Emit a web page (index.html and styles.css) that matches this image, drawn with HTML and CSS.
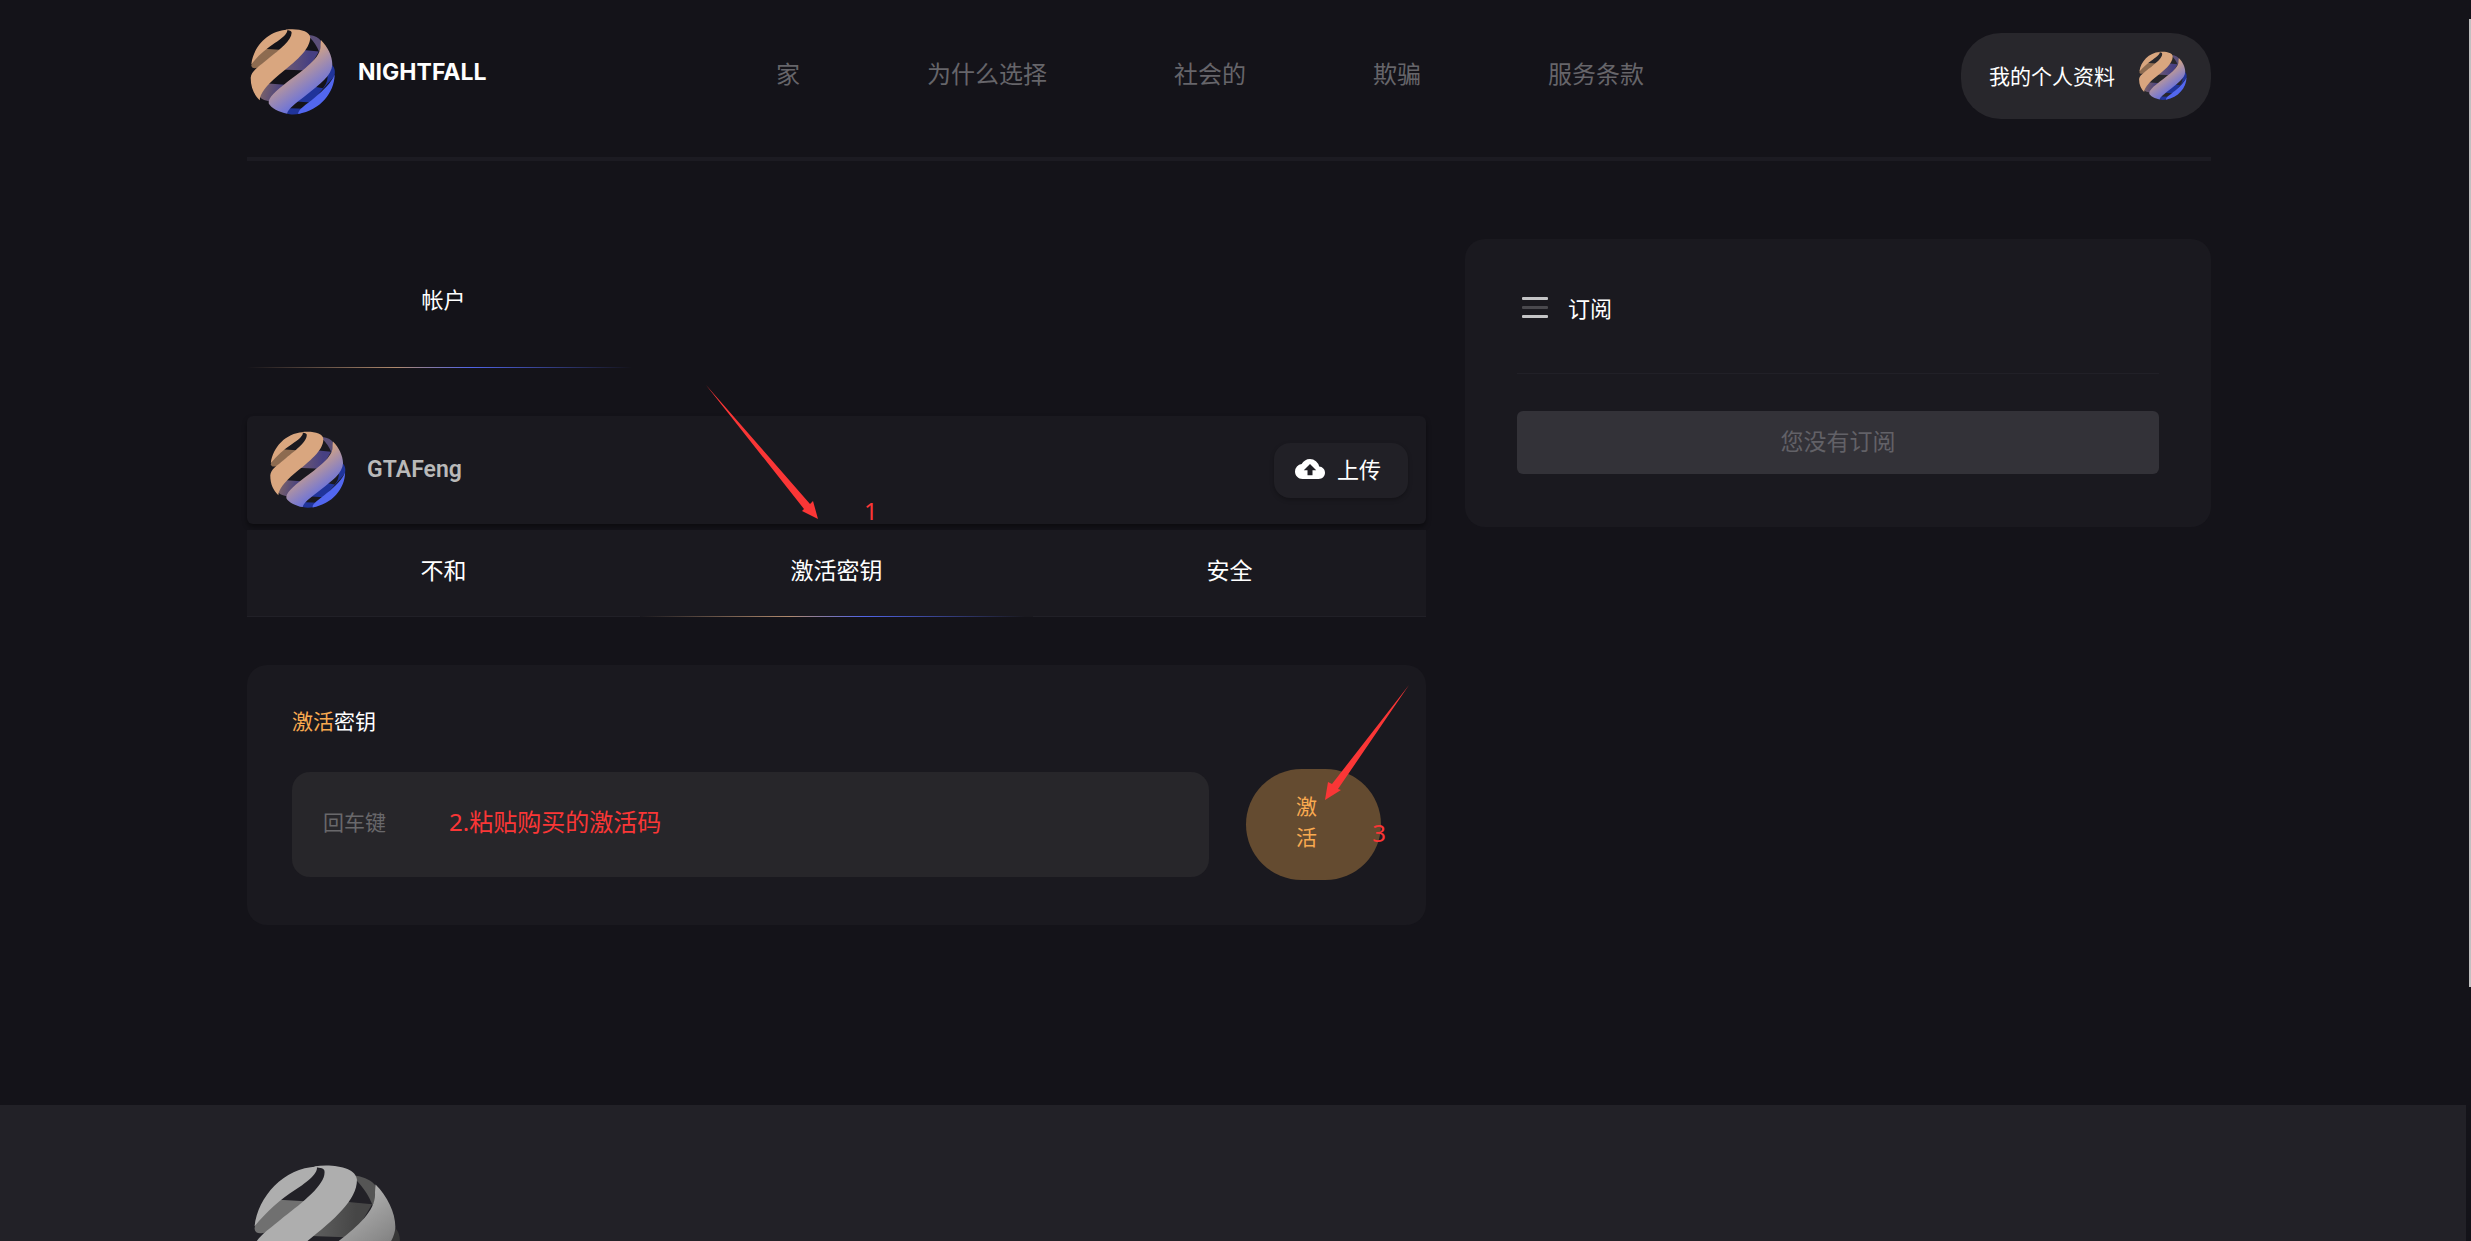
FILE: index.html
```html
<!DOCTYPE html>
<html lang="zh-CN">
<head>
    <meta charset="UTF-8">
    <meta name="viewport" content="width=device-width, initial-scale=1.0">
    <title>NIGHTFALL</title>
    <link rel="stylesheet" href="styles.css">
</head>
<body>
    <!-- 公用图标 -->
    <svg class="sprite" aria-hidden="true">
        <defs>
            <linearGradient id="purple" gradientUnits="userSpaceOnUse" x1="125" y1="115" x2="205" y2="225">
                <stop offset="0" stop-color="#d9a67f"/>
                <stop offset="1" stop-color="#5468ee"/>
            </linearGradient>
            <linearGradient id="backTop" gradientUnits="userSpaceOnUse" x1="110" y1="110" x2="185" y2="115">
                <stop offset="0" stop-color="#6e5a72"/>
                <stop offset="1" stop-color="#474082"/>
            </linearGradient>
            <linearGradient id="backLow" gradientUnits="userSpaceOnUse" x1="38" y1="190" x2="95" y2="205">
                <stop offset="0" stop-color="#7e6467"/>
                <stop offset="1" stop-color="#4b437f"/>
            </linearGradient>
        </defs>
        <symbol id="globe" viewBox="0 0 273 275">
            <path fill="#8d6b50" d="M12 118C14 98 28 80 48 68L98 71L32 124C20 128 13 126 12 118Z"/>
            <path fill="url(#backTop)" d="M128 68L214 76L180 133L98 130Z"/>
            <path fill="#5b4f78" d="M186 27C202 29 214 36 220 44C224 55 221 68 215 78C208 60 197 45 186 34Z"/>
            <path fill="url(#backLow)" d="M54 171L122 176L68 225C50 224 38 217 35 208Z"/>
            <path fill="#20349b" d="M252 115C263 124 263 140 260 150L190 229L145 226L180 178L226 186C237 174 241 160 240 140Z"/>
            <path fill="#20349b" d="M119 262C118 254 122 249 128 246L172 247L158 262C143 265 128 265 119 262Z"/>
            <path fill="#d9a67f" d="M12 114C18 62 62 14 119 11C122 22 104 37 82 51C56 68 32 89 12 114Z"/>
            <path fill="#d9a67f" d="M114 11C150 6 187 14 188 34C188 72 142 108 92 148C56 178 38 203 37 222C20 205 10 185 10 155C12 135 30 125 62 98C98 70 136 40 132 18C130 12 122 14 114 11Z"/>
            <path fill="url(#purple)" d="M220 42C240 62 254 90 254 115C252 150 215 175 180 203C140 235 122 246 119 262C95 258 70 245 64 232C61 215 85 195 120 167C168 130 222 95 219 56Z"/>
            <path fill="#5267ef" d="M261 146C260 200 218 252 152 263C150 250 176 235 200 215C230 191 250 170 261 146Z"/>
        </symbol>
    </svg>

    <header class="header">
        <div class="brand">
            <svg class="brand-logo"><use href="#globe"/></svg>
            <span>NIGHTFALL</span>
        </div>
        <nav class="nav">
            <a href="#">家</a>
            <a href="#">为什么选择</a>
            <a href="#">社会的</a>
            <a href="#">欺骗</a>
            <a href="#">服务条款</a>
        </nav>
        <a class="profile" href="#">
            我的个人资料
            <svg class="profile-logo"><use href="#globe"/></svg>
        </a>
    </header>

    <main class="main">
        <div class="content">
            <div class="tabs">
                <button class="tab tab-account active">帐户</button>
            </div>

            <section class="user">
                <svg class="avatar"><use href="#globe"/></svg>
                <span class="user-name">GTAFeng</span>
                <button class="upload">
                    <svg class="cloud" viewBox="0 4 24 16"><path fill="#fff" d="M19.35 10.04A7.49 7.49 0 0 0 12 4C9.11 4 6.6 5.64 5.35 8.04A5.994 5.994 0 0 0 0 14c0 3.31 2.69 6 6 6h13c2.76 0 5-2.24 5-5 0-2.64-2.05-4.78-4.65-4.96zM14 13v4h-4v-4H7l5-5 5 5h-3z"/></svg>
                    上传
                </button>
            </section>

            <div class="tabs tabs-panel">
                <button class="tab">不和</button>
                <button class="tab active">激活密钥</button>
                <button class="tab">安全</button>
                <!-- 步骤 1 -->
                <svg class="arrow arrow-one" viewBox="0 0 112 134"><path fill="#fa3636" d="M0 0L104 119L107 116L112 134L96 126L98 124Z"/></svg>
                <span class="note note-one">1</span>
            </div>

            <section class="card activate">
                <h2><span class="accent">激活</span>密钥</h2>
                <form class="key-form">
                    <div class="field">
                        <input type="text" class="key-input" placeholder="回车键" aria-label="激活密钥">
                        <span class="note note-two">2.粘贴购买的激活码</span>
                    </div>
                    <div class="submit">
                        <button type="button" class="activate-btn">激<br>活</button>
                        <!-- 步骤 3 -->
                        <svg class="arrow arrow-three" viewBox="0 0 84 115"><path fill="#fa3636" d="M84 0L13 104L16 105L0 115L3 97L7 99Z"/></svg>
                        <span class="note note-three">3</span>
                    </div>
                </form>
            </section>
        </div>

        <aside class="card sidebar">
            <h2 class="sidebar-title">
                <svg class="bars" viewBox="0 0 26 22">
                    <rect width="26" height="3" rx="1" fill="#c4c4c6"/>
                    <rect y="9" width="26" height="3" rx="1" fill="#4a494e"/>
                    <rect y="18" width="26" height="3" rx="1" fill="#c4c4c6"/>
                </svg>
                订阅
            </h2>
            <button class="empty" disabled>您没有订阅</button>
        </aside>
    </main>

    <footer class="footer">
        <svg class="footer-logo"><use href="#globe"/></svg>
    </footer>
    <div class="scroll"></div>
</body>
</html>
```

FILE: styles.css
```css
* {
    box-sizing: border-box;
}
body {
    margin: 0;
    height: 100vh;
    overflow: hidden;
    display: flex;
    flex-direction: column;
    background: #141319;
    color: #fff;
    font-family: "Noto Sans", "Noto Sans CJK SC", sans-serif;
    font-size: 22px;
    line-height: 32px;
}
button, input {
    border: none;
    font: inherit;
    color: inherit;
}
button {
    cursor: pointer;
}
a {
    color: inherit;
    text-decoration: none;
}
h2 {
    margin: 0;
    font-size: 22px;
    font-weight: 400;
}
svg {
    display: block;
    flex-shrink: 0;
}
.sprite {
    position: absolute;
    width: 0;
    height: 0;
}

/* 顶部导航 */
.header {
    flex-shrink: 0;
    margin: 0 260px 0 10%;
    padding: 33px 0 38px;
    display: grid;
    grid-template-columns: 1fr auto 1fr;
    align-items: center;
    border-bottom: 4px solid #1c1b22;
}
.brand {
    display: flex;
    align-items: center;
    gap: 19px;
    height: 78px;
    margin-bottom: 8px;
    font-family: Inter, sans-serif;
    font-size: 23px;
    font-weight: 700;
}
.brand-logo {
    width: 92px;
    height: 92px;
}
.nav {
    display: flex;
    gap: 127px;
    padding: 0 38px 4px 0;
    font-size: 24px;
    color: #66656a;
}
.profile {
    justify-self: end;
    display: flex;
    align-items: center;
    gap: 22px;
    height: 86px;
    padding: 0 22px 0 28px;
    border-radius: 40px;
    background: #28272c;
    font-size: 21px;
}
.profile-logo {
    width: 52px;
    height: 52px;
}

/* 主体 */
.main {
    flex-shrink: 0;
    margin: 0 260px 0 10%;
    padding: 78px 0 180px;
    display: grid;
    grid-template-columns: 1.58fr 1fr;
    gap: 39px;
    align-items: start;
}
.content {
    display: flex;
    flex-direction: column;
}
.card {
    background: #1a191f;
    border-radius: 20px;
}
.tabs {
    display: grid;
    grid-template-columns: repeat(3, 1fr);
}
.tab {
    padding: 24px 0 30px;
    background: none;
    border-bottom: 1px solid transparent;
    font-size: 23px;
}
.tab-account {
    padding: 44px 0 52px;
    font-size: 22px;
}
.tab.active {
    border-bottom: none;
    padding-bottom: 31px;
    background: linear-gradient(90deg, transparent, #b08a6e 38%, #5165e8 57%, transparent 98%) bottom / 100% 1px no-repeat;
}
.tab-account.active {
    padding-bottom: 53px;
}
.tabs-panel {
    position: relative;
    margin-top: 6px;
    background: #1a191f;
}
.tabs-panel .tab:not(.active) {
    border-bottom-color: #212027;
}
.user {
    display: flex;
    align-items: center;
    height: 108px;
    margin-top: 48px;
    padding: 0 18px 0 20px;
    border-radius: 6px;
    background: #1a191f;
    box-shadow: 0 3px 5px rgba(0, 0, 0, 0.4);
}
.avatar {
    width: 82px;
    height: 82px;
}
.user-name {
    margin-left: 18px;
    font-family: Roboto, sans-serif;
    font-weight: 600;
    font-size: 23px;
    color: #b9b9b9;
}
.upload {
    display: flex;
    align-items: center;
    gap: 12px;
    height: 55px;
    margin-left: auto;
    padding: 0 27px 2px 21px;
    border-radius: 16px;
    background: #212026;
    box-shadow: 0 2px 4px rgba(0, 0, 0, 0.25);
}
.cloud {
    width: 30px;
    height: 20px;
}

/* 激活密钥 */
.activate {
    margin-top: 48px;
    padding: 40px 45px 45px;
}
.activate h2 {
    font-size: 21px;
}
.accent {
    color: #f9aa50;
}
.key-form {
    display: flex;
    align-items: center;
    gap: 37px;
    margin-top: 32px;
}
.field {
    position: relative;
    flex: 1;
}
.key-input {
    display: block;
    width: 100%;
    height: 105px;
    padding: 0 31px 5px;
    border-radius: 18px;
    background: #27262a;
    font-size: 21px;
}
.key-input::placeholder {
    color: #69686b;
    opacity: 1;
}
.submit {
    position: relative;
}
.activate-btn {
    display: block;
    width: 135px;
    height: 111px;
    padding: 0 50px 6px;
    border-radius: 56px;
    background: #644b30;
    color: #f9aa50;
    font-size: 21px;
    line-height: 31px;
    text-align: left;
}

/* 步骤标注 */
.note {
    position: absolute;
    color: #fa3636;
    font-size: 24px;
    pointer-events: none;
}
.note-one {
    left: 617px;
    top: -35px;
}
.note-two {
    left: 157px;
    top: 34px;
}
.note-three {
    right: -5px;
    top: 48px;
}
.arrow {
    position: absolute;
    pointer-events: none;
}
.arrow-one {
    left: 459px;
    top: -145px;
    width: 112px;
    height: 134px;
}
.arrow-three {
    right: -28px;
    top: -84px;
    width: 84px;
    height: 115px;
}

/* 订阅 */
.sidebar {
    padding: 53px 52px;
}
.sidebar-title {
    display: flex;
    align-items: center;
    gap: 20px;
    padding: 0 5px 49px;
    border-bottom: 1px solid #212027;
}
.bars {
    width: 26px;
    height: 22px;
}
.empty {
    display: block;
    width: 100%;
    height: 63px;
    margin-top: 37px;
    padding-bottom: 5px;
    border-radius: 6px;
    background: #333238;
    color: #626167;
    font-size: 23px;
    cursor: default;
}

/* 页脚 */
.footer {
    flex: 1;
    min-height: 0;
    overflow: hidden;
    margin-right: 5px;
    padding: 55px 10% 0;
    background: #222127;
}
.footer-logo {
    width: 160px;
    height: 160px;
    filter: grayscale(1);
}
.scroll {
    position: fixed;
    top: 19px;
    right: 0;
    width: 2px;
    height: 78%;
    background: #c1c1c1;
}
```
